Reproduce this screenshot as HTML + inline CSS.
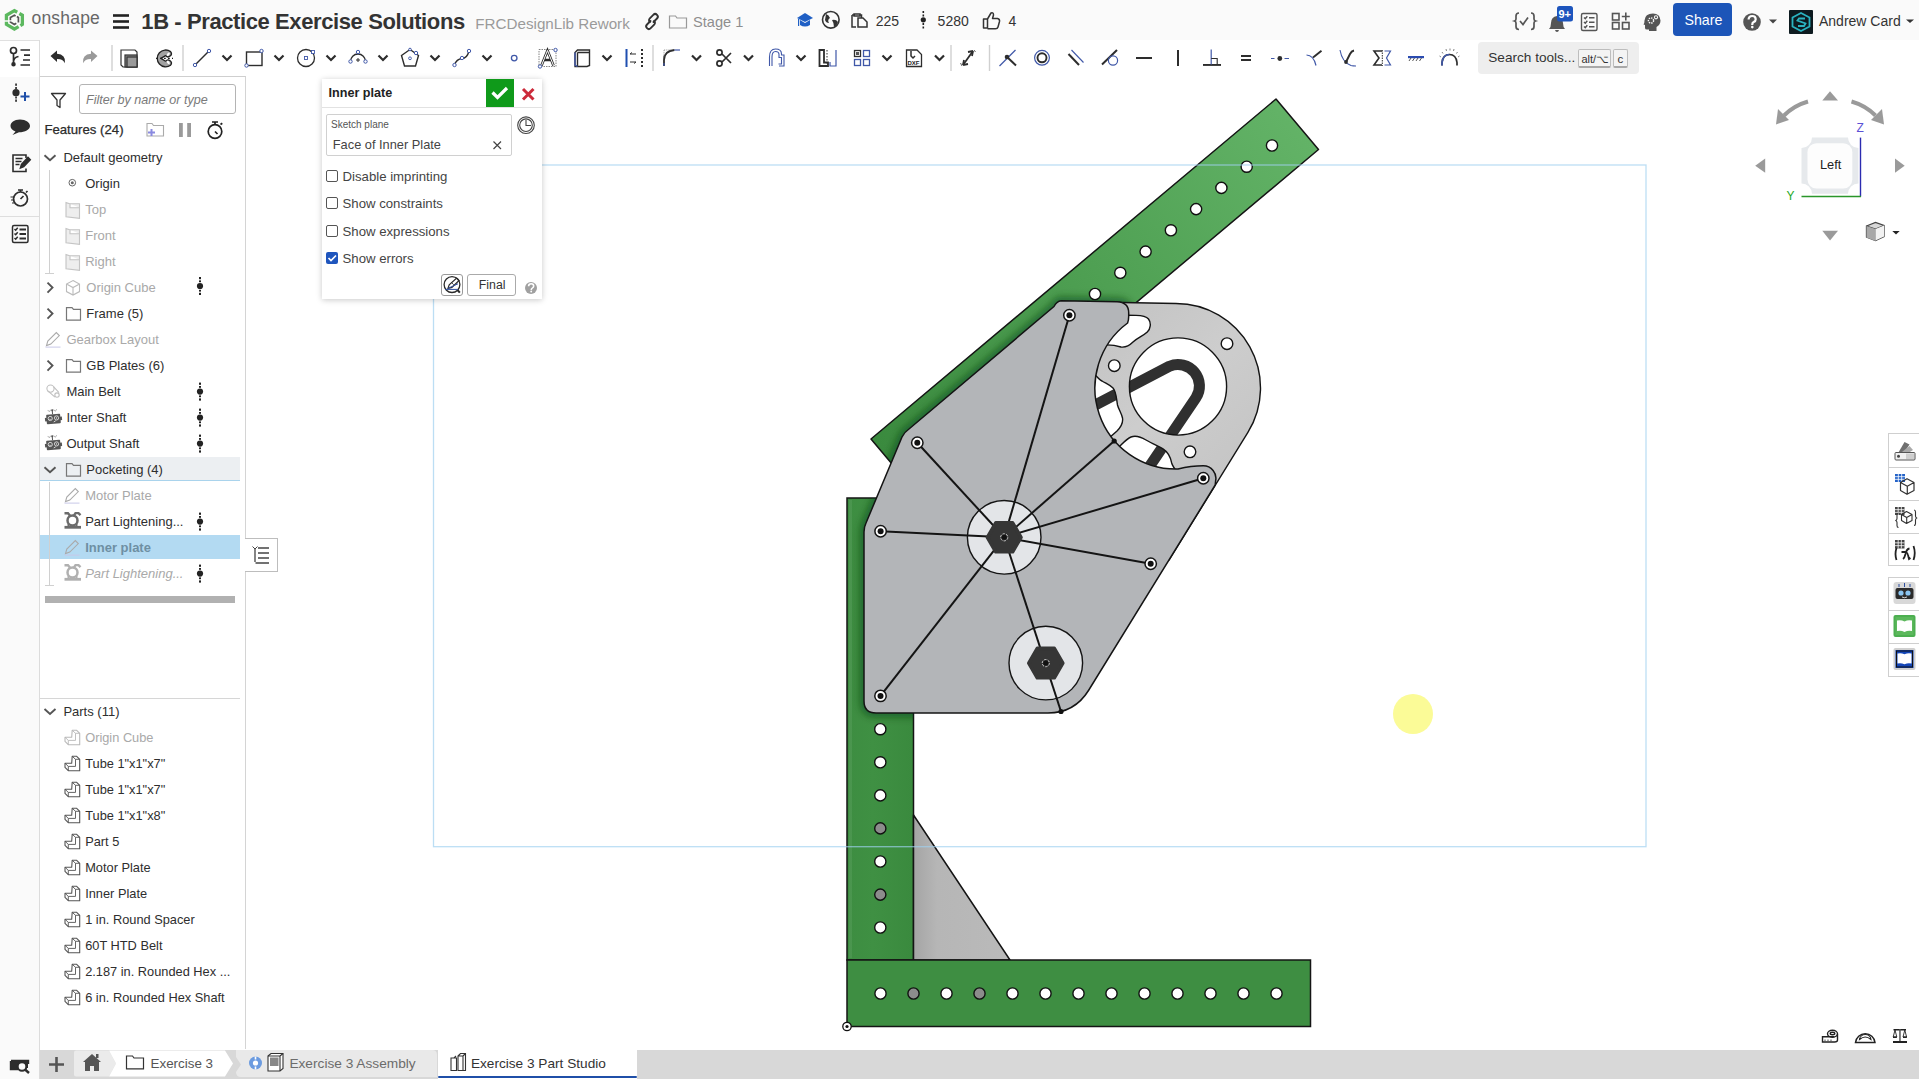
<!DOCTYPE html><html><head><meta charset="utf-8"><style>
html,body{margin:0;padding:0}
body{width:1919px;height:1079px;position:relative;overflow:hidden;background:#fff;font-family:"Liberation Sans", sans-serif}
.t{position:absolute;white-space:nowrap}
</style></head><body>
<div style="position:absolute;left:0px;top:0px;width:1919px;height:40px;background:#fafafa"></div>
<div style="position:absolute;left:0px;top:40px;width:39px;height:1039px;background:#fafafa;border-right:1px solid #dcdcdc"></div>
<div style="position:absolute;left:0px;top:40px;width:39px;height:36px;background:#fff;border-top:1px solid #e0e0e0"></div>
<div style="position:absolute;left:40px;top:40px;width:1879px;height:36px;background:#fff"></div>
<div style="position:absolute;left:40px;top:76px;width:1879px;height:973px;background:#fff"></div>
<div style="position:absolute;left:40px;top:76px;width:206px;height:973px;background:#fff;border-top:1px solid #cfcfcf;border-right:1px solid #d4d4d4;box-sizing:border-box"></div>
<div style="position:absolute;left:0px;top:216px;width:39px;height:1px;background:#dedede"></div>
<div style="position:absolute;left:1673px;top:3px;width:59px;height:32.5px;background:#1c55b8;border-radius:4px"></div>
<div style="position:absolute;left:1478.3px;top:42.2px;width:160.6px;height:31.4px;background:#eeeeee;border-radius:4px"></div>
<div style="position:absolute;left:1578.3px;top:49.3px;width:32.7px;height:18.7px;background:#f4f4f4;border:1px solid #bdbdbd;border-bottom:2px solid #a9a9a9;border-radius:2px;box-sizing:border-box"></div>
<div style="position:absolute;left:1612.8px;top:49.3px;width:15.7px;height:18.7px;background:#f4f4f4;border:1px solid #bdbdbd;border-bottom:2px solid #a9a9a9;border-radius:2px;box-sizing:border-box"></div>
<div style="position:absolute;left:79.4px;top:84.2px;width:157px;height:29.6px;border:1px solid #b4b4b4;border-radius:3px;box-sizing:border-box;background:#fff"></div>
<div style="position:absolute;left:40px;top:457px;width:200px;height:23.5px;background:#eceff2;border-bottom:1.5px solid #a9d3ec;box-sizing:border-box"></div>
<div style="position:absolute;left:40px;top:535px;width:200px;height:24px;background:#b3daf2"></div>
<div style="position:absolute;left:45.2px;top:596.2px;width:190px;height:6.6px;background:#b1b1b1"></div>
<div style="position:absolute;left:40px;top:698px;width:200px;height:1px;background:#d6d6d6"></div>
<svg width="1919" height="1079" style="position:absolute;left:0;top:0">
<defs>
<linearGradient id="gDiag" x1="1300" y1="120" x2="890" y2="460" gradientUnits="userSpaceOnUse">
<stop offset="0" stop-color="#63b367"/><stop offset="0.5" stop-color="#4e9f52"/><stop offset="1" stop-color="#3a8a3e"/></linearGradient>
<linearGradient id="gVert" x1="847" y1="0" x2="913" y2="0" gradientUnits="userSpaceOnUse">
<stop offset="0" stop-color="#3d8d41"/><stop offset="0.4" stop-color="#3f9043"/><stop offset="1" stop-color="#3a8a3e"/></linearGradient>
<linearGradient id="gGus" x1="913" y1="0" x2="1010" y2="0" gradientUnits="userSpaceOnUse">
<stop offset="0" stop-color="#a4a4a4"/><stop offset="0.25" stop-color="#b6b6b6"/><stop offset="1" stop-color="#bababa"/></linearGradient>
<linearGradient id="gMotor" x1="1100" y1="300" x2="1260" y2="470" gradientUnits="userSpaceOnUse">
<stop offset="0" stop-color="#c2c2c2"/><stop offset="0.5" stop-color="#cdcdcd"/><stop offset="1" stop-color="#c4c4c4"/></linearGradient>
</defs>
<polygon points="871,439 1276,99 1318.5,149.5 913.5,489.5" fill="url(#gDiag)" stroke="#141414" stroke-width="1.5" stroke-linejoin="round"/>
<rect x="847" y="498" width="66.5" height="462" fill="url(#gVert)" stroke="#141414" stroke-width="1.5"/>
<defs><clipPath id="barsClip"><polygon points="871,439 1276,99 1318.5,149.5 913.5,489.5"/><rect x="847" y="498" width="66.5" height="462"/></clipPath><filter id="blr" x="-10%" y="-10%" width="120%" height="120%"><feGaussianBlur stdDeviation="3.5"/></filter></defs>
<g clip-path="url(#barsClip)"><path d="M1061,300.8 L1117,301.8 Q1128.7,302.2 1128.7,313 L1128.7,316.3 Q1128.7,320 1127.6,323 A81,81 0 0 0 1178,469 C1186,467 1194,465.7 1203.3,465.7 A12.6,12.6 0 0 1 1215.6,481 L1215.2,485 L1088.5,690.5 Q1074.5,713 1048,713 L876,713 Q864,713 864,701 L864,532 Q864,527 866,523 L902,437 Q904,432.5 909,429 L1054,306.5 Q1057,301 1061,300.8 Z" fill="none" stroke="#0b3d10" stroke-opacity="0.5" stroke-width="9" filter="url(#blr)"/><rect x="849" y="500" width="3" height="458" fill="#fff" fill-opacity="0.07"/></g>
<circle cx="1272" cy="145.5" r="5.6" fill="#fff" stroke="#111" stroke-width="1.4"/>
<circle cx="1246.7" cy="166.7" r="5.6" fill="#fff" stroke="#111" stroke-width="1.4"/>
<circle cx="1221.4" cy="187.9" r="5.6" fill="#fff" stroke="#111" stroke-width="1.4"/>
<circle cx="1196.1" cy="209.1" r="5.6" fill="#fff" stroke="#111" stroke-width="1.4"/>
<circle cx="1170.9" cy="230.3" r="5.6" fill="#fff" stroke="#111" stroke-width="1.4"/>
<circle cx="1145.6" cy="251.6" r="5.6" fill="#fff" stroke="#111" stroke-width="1.4"/>
<circle cx="1120.3" cy="272.8" r="5.6" fill="#fff" stroke="#111" stroke-width="1.4"/>
<circle cx="1095" cy="294" r="5.6" fill="#fff" stroke="#111" stroke-width="1.4"/>
<circle cx="880.3" cy="729.2" r="5.6" fill="#fff" stroke="#111" stroke-width="1.4"/>
<circle cx="880.3" cy="762.3" r="5.6" fill="#fff" stroke="#111" stroke-width="1.4"/>
<circle cx="880.3" cy="795.4" r="5.6" fill="#fff" stroke="#111" stroke-width="1.4"/>
<circle cx="880.3" cy="828.4" r="5.6" fill="#8c8c8c" stroke="#111" stroke-width="1.4"/>
<circle cx="880.3" cy="861.5" r="5.6" fill="#fff" stroke="#111" stroke-width="1.4"/>
<circle cx="880.3" cy="894.6" r="5.6" fill="#8c8c8c" stroke="#111" stroke-width="1.4"/>
<circle cx="880.3" cy="927.5" r="5.6" fill="#fff" stroke="#111" stroke-width="1.4"/>
<polygon points="913.5,815 1010,960 913.5,960" fill="url(#gGus)" stroke="#141414" stroke-width="1.5" stroke-linejoin="round"/>
<rect x="847" y="960" width="463.5" height="66.5" fill="#3e8e42" stroke="#141414" stroke-width="1.5"/>
<circle cx="880.5" cy="993.5" r="5.6" fill="#fff" stroke="#111" stroke-width="1.4"/>
<circle cx="913.5" cy="993.5" r="5.6" fill="#8c8c8c" stroke="#111" stroke-width="1.4"/>
<circle cx="946.5" cy="993.5" r="5.6" fill="#fff" stroke="#111" stroke-width="1.4"/>
<circle cx="979.5" cy="993.5" r="5.6" fill="#8c8c8c" stroke="#111" stroke-width="1.4"/>
<circle cx="1012.5" cy="993.5" r="5.6" fill="#fff" stroke="#111" stroke-width="1.4"/>
<circle cx="1045.5" cy="993.5" r="5.6" fill="#fff" stroke="#111" stroke-width="1.4"/>
<circle cx="1078.5" cy="993.5" r="5.6" fill="#fff" stroke="#111" stroke-width="1.4"/>
<circle cx="1111.5" cy="993.5" r="5.6" fill="#fff" stroke="#111" stroke-width="1.4"/>
<circle cx="1144.5" cy="993.5" r="5.6" fill="#fff" stroke="#111" stroke-width="1.4"/>
<circle cx="1177.5" cy="993.5" r="5.6" fill="#fff" stroke="#111" stroke-width="1.4"/>
<circle cx="1210.5" cy="993.5" r="5.6" fill="#fff" stroke="#111" stroke-width="1.4"/>
<circle cx="1243.5" cy="993.5" r="5.6" fill="#fff" stroke="#111" stroke-width="1.4"/>
<circle cx="1276.5" cy="993.5" r="5.6" fill="#fff" stroke="#111" stroke-width="1.4"/>
<circle cx="847" cy="1026.5" r="4.2" fill="#fff" stroke="#111" stroke-width="1.3"/><circle cx="847" cy="1026.5" r="1.6" fill="#111"/>
<path d="M1086,409.8 L1169.6,366.2 A21.5,21.5 0 0 1 1195.8,398 L1141,479" fill="none" stroke="#303030" stroke-width="11" stroke-linejoin="round"/>
<path d="M1095,302 L1176,303.5 A84.5,84.5 0 0 1 1247.9,432.4 L1169.1,560 L1000,650 Z M1226.6,386.5 A48.6,48.6 0 1 0 1129.4,386.5 A48.6,48.6 0 1 0 1226.6,386.5 Z M1126,315.2 L1136,315.4 C1142,315.5 1146,316 1148.5,319 C1151.5,323 1150.5,329 1147.3,332 C1143,336 1137,338 1133,342 C1129,346 1125,347.5 1121,347 C1116,345.5 1112,344.5 1104,345 L1100,330 Z M1094,373.5 C1097,377 1099,379.5 1102,381 C1106,383.5 1110,385 1113,388 C1116.5,392 1116.5,400 1117.5,405 C1118.5,409 1121.5,413 1122.5,418 C1123.5,424 1120,428 1117,431 L1109,438 L1090,420 Z M1119,447 C1123,443 1127,438.5 1131,437 C1135,435.5 1141,437 1146,440 C1152,443.5 1158,446 1163,448.8 C1168,452 1170.5,457 1171.6,462.7 C1172.5,466 1174,468 1177,472 L1150,478 Z" fill="url(#gMotor)" fill-rule="evenodd" stroke="#141414" stroke-width="1.4"/>
<circle cx="1227" cy="343.7" r="5.8" fill="#fff" stroke="#141414" stroke-width="1.4"/>
<circle cx="1114.3" cy="365.7" r="5.8" fill="#fff" stroke="#141414" stroke-width="1.4"/>
<circle cx="1190" cy="451.8" r="5.8" fill="#fff" stroke="#141414" stroke-width="1.4"/>
<path d="M1061,300.8 L1117,301.8 Q1128.7,302.2 1128.7,313 L1128.7,316.3 Q1128.7,320 1127.6,323 A81,81 0 0 0 1178,469 C1186,467 1194,465.7 1203.3,465.7 A12.6,12.6 0 0 1 1215.6,481 L1215.2,485 L1088.5,690.5 Q1074.5,713 1048,713 L876,713 Q864,713 864,701 L864,532 Q864,527 866,523 L902,437 Q904,432.5 909,429 L1054,306.5 Q1057,301 1061,300.8 Z" fill="#b3b5b8" stroke="#141414" stroke-width="1.5" stroke-linejoin="round"/>
<circle cx="1004.2" cy="537.3" r="36.8" fill="#e3e5e8" stroke="#141414" stroke-width="1.4"/>
<circle cx="1045.8" cy="663.1" r="36.8" fill="#e3e5e8" stroke="#141414" stroke-width="1.4"/>
<line x1="1004.2" y1="537.3" x2="1069.4" y2="315.3" stroke="#141414" stroke-width="2"/>
<line x1="1004.2" y1="537.3" x2="917.3" y2="442.8" stroke="#141414" stroke-width="2"/>
<line x1="1004.2" y1="537.3" x2="880.6" y2="531.2" stroke="#141414" stroke-width="2"/>
<line x1="1004.2" y1="537.3" x2="880.5" y2="695.9" stroke="#141414" stroke-width="2"/>
<line x1="1004.2" y1="537.3" x2="1203.3" y2="478.3" stroke="#141414" stroke-width="2"/>
<line x1="1004.2" y1="537.3" x2="1150.7" y2="563.8" stroke="#141414" stroke-width="2"/>
<line x1="1004.2" y1="537.3" x2="1114.2" y2="441" stroke="#141414" stroke-width="2"/>
<line x1="1004.2" y1="537.3" x2="1061" y2="711.5" stroke="#141414" stroke-width="2"/>
<polygon points="1021,537.3 1012.6,551.8 995.8,551.8 987.4,537.3 995.8,522.8 1012.6,522.8" fill="#363636" stroke="#363636" stroke-width="3.6" stroke-linejoin="round"/>
<circle cx="1004.2" cy="537.3" r="3.6" fill="none" stroke="#c8c8c8" stroke-width="1" stroke-dasharray="2.5 1.2"/><circle cx="1004.2" cy="537.3" r="2.5" fill="#111"/>
<polygon points="1062.8,663.1 1054.3,677.8 1037.3,677.8 1028.8,663.1 1037.3,648.4 1054.3,648.4" fill="#363636" stroke="#363636" stroke-width="3.6" stroke-linejoin="round"/>
<circle cx="1045.8" cy="663.1" r="3.6" fill="none" stroke="#c8c8c8" stroke-width="1" stroke-dasharray="2.5 1.2"/><circle cx="1045.8" cy="663.1" r="2.5" fill="#111"/>
<circle cx="1069.4" cy="315.3" r="5.7" fill="#fff" stroke="#141414" stroke-width="1.5"/><circle cx="1069.4" cy="315.3" r="3.0" fill="#111"/>
<circle cx="917.3" cy="442.8" r="5.7" fill="#fff" stroke="#141414" stroke-width="1.5"/><circle cx="917.3" cy="442.8" r="3.0" fill="#111"/>
<circle cx="880.6" cy="531.2" r="5.7" fill="#fff" stroke="#141414" stroke-width="1.5"/><circle cx="880.6" cy="531.2" r="3.0" fill="#111"/>
<circle cx="880.5" cy="695.9" r="5.7" fill="#fff" stroke="#141414" stroke-width="1.5"/><circle cx="880.5" cy="695.9" r="3.0" fill="#111"/>
<circle cx="1203.3" cy="478.3" r="5.7" fill="#fff" stroke="#141414" stroke-width="1.5"/><circle cx="1203.3" cy="478.3" r="3.0" fill="#111"/>
<circle cx="1150.7" cy="563.8" r="5.7" fill="#fff" stroke="#141414" stroke-width="1.5"/><circle cx="1150.7" cy="563.8" r="3.0" fill="#111"/>
<circle cx="1114.2" cy="441" r="2.6" fill="#111"/>
<circle cx="1061" cy="711.5" r="2.6" fill="#111"/>
<rect x="433.5" y="165" width="1212.5" height="681.7" fill="none" stroke="#9fd0f0" stroke-opacity="0.7" stroke-width="1.3"/>
<circle cx="1413" cy="714" r="20" fill="#fbfb97"/>
</svg>
<div style="position:absolute;left:245.4px;top:538.3px;width:32.3px;height:33.4px;background:#fff;border:1px solid #bdbdbd;border-left:none;box-sizing:border-box"></div>
<div style="position:absolute;left:322px;top:78.7px;width:220.2px;height:220.1px;background:#fff;box-shadow:0 1px 6px rgba(0,0,0,0.22)"></div>
<div style="position:absolute;left:322px;top:106.5px;width:220.2px;height:1px;background:#e2e2e2"></div>
<div style="position:absolute;left:486px;top:79px;width:28px;height:27.8px;background:#0f9a1a"></div>
<div style="position:absolute;left:325.8px;top:113.6px;width:186.6px;height:42.8px;border:1px solid #d0d0d0;box-sizing:border-box;border-radius:2px"></div>
<div style="position:absolute;left:326.1px;top:170.4px;width:12px;height:11.7px;border:1.2px solid #555;border-radius:2px;box-sizing:border-box"></div>
<div style="position:absolute;left:326.1px;top:197.3px;width:12px;height:11.7px;border:1.2px solid #555;border-radius:2px;box-sizing:border-box"></div>
<div style="position:absolute;left:326.1px;top:225px;width:12px;height:11.7px;border:1.2px solid #555;border-radius:2px;box-sizing:border-box"></div>
<div style="position:absolute;left:326.1px;top:252px;width:12px;height:11.7px;background:#1f55bd;border-radius:2px"></div>
<div style="position:absolute;left:441.3px;top:274.3px;width:21.4px;height:21.3px;border:1px solid #9a9a9a;border-radius:3px;box-sizing:border-box"></div>
<div style="position:absolute;left:467.3px;top:274.3px;width:48.3px;height:21.3px;border:1px solid #aaa;border-radius:3px;box-sizing:border-box"></div>
<div style="position:absolute;left:1888px;top:433px;width:31px;height:133px;border:1px solid #cfcfcf;border-right:none;box-sizing:border-box;background:#fff"></div>
<div style="position:absolute;left:1888px;top:576.5px;width:31px;height:100px;border:1px solid #cfcfcf;border-right:none;box-sizing:border-box;background:#fff"></div>
<div style="position:absolute;left:1888px;top:466.8px;width:31px;height:1px;background:#cfcfcf"></div>
<div style="position:absolute;left:1888px;top:499.8px;width:31px;height:1px;background:#cfcfcf"></div>
<div style="position:absolute;left:1888px;top:533px;width:31px;height:1px;background:#cfcfcf"></div>
<div style="position:absolute;left:1888px;top:609.8px;width:31px;height:1px;background:#cfcfcf"></div>
<div style="position:absolute;left:1888px;top:642.8px;width:31px;height:1px;background:#cfcfcf"></div>
<div style="position:absolute;left:40px;top:1049.5px;width:1879px;height:29.5px;background:#d8d8d8"></div>
<div style="position:absolute;left:438.4px;top:1050px;width:199px;height:29px;background:#fff"></div>
<div style="position:absolute;left:438.4px;top:1076px;width:199px;height:2.2px;background:#1f4fa8;border-radius:1px"></div>
<svg width="1919" height="1079" style="position:absolute;left:0;top:0">
<polygon points="14.4,10.6 22.37,15.2 22.37,24.4 14.4,29 6.43,24.4 6.43,15.2" fill="#fbfdfb"/><g fill="none" stroke="#5cb85f" stroke-width="3.3" stroke-linejoin="miter"><path d="M6.43,20.2 V15.2 L14.4,10.6 L17.2,12.2"/><path d="M19.4,13.5 L22.37,15.2 V24.4 L20.4,25.6"/><path d="M18.6,26.6 L14.4,29 L6.43,24.4 V21.8"/></g><g fill="none" stroke="#555" stroke-width="1.7"><path d="M10.4,20.3 V17.5 L14.4,15.2 L15.6,15.9"/><path d="M16.9,16.6 L18.4,17.5 V22.4"/><path d="M10.4,21.4 V22.1 L14.4,24.4 L16.3,23.3"/></g>
<rect x="113" y="14.2" width="16" height="2.6" fill="#222"/>
<rect x="113" y="20.2" width="16" height="2.6" fill="#222"/>
<rect x="113" y="26.2" width="16" height="2.6" fill="#222"/>
<g fill="none" stroke="#333" stroke-width="1.9" stroke-linecap="round"><path d="M650.5,21 l-3.5,3.5 a2.6,2.6 0 0 0 3.7,3.7 l3.5,-3.5 a2.6,2.6 0 0 0 0,-3.7"/><path d="M653.5,22 l3.5,-3.5 a2.6,2.6 0 0 0 -3.7,-3.7 l-3.5,3.5 a2.6,2.6 0 0 0 0,3.7"/></g>
<path d="M669.5,16 h6 l1.5,2 h9.5 v10 h-17 z" fill="none" stroke="#999" stroke-width="1.2"/>
<g fill="#1f5fc4"><polygon points="797,18 805,13 813,18 805,22"/><path d="M800,20 v5 q5,3 10,0 v-5 l-5,3 z"/><rect x="798" y="19" width="1.2" height="7"/></g>
<g><circle cx="830.8" cy="19.8" r="8.3" fill="none" stroke="#333" stroke-width="1.6"/><path d="M826,14 q3,1 4,4 q-3,2 -1,5 q-3,0 -4,-3 z M832,20 q4,-1 6,2 q-1,4 -4,5 q0,-4 -2,-7z" fill="#333"/></g>
<g fill="none" stroke="#333" stroke-width="1.5"><path d="M854,14 h6 v2 h-6z"/><path d="M852,15 h3 M860,15 h1.5 v3 M852,15 v12 h4"/><path d="M858,18 h5 l4,4 v5 h-9 z"/></g>
<g fill="#222"><circle cx="923.3" cy="19.8" r="2.6"/><rect x="922.5" y="11" width="1.6" height="2"/><rect x="922.5" y="14.5" width="1.6" height="2"/><rect x="922.5" y="23" width="1.6" height="2"/><rect x="922.5" y="26.5" width="1.6" height="2"/></g>
<path d="M983.5,19 h4 v9 h-4 z M987.5,19 l3.5,-6 q2.5,-1 2.5,2 l-1,3.5 h5 q2.5,0.5 2,3 l-1.5,5.5 q-0.5,1.8 -2.5,1.8 h-8" fill="none" stroke="#333" stroke-width="1.5" stroke-linejoin="round"/>
<g fill="none" stroke="#555" stroke-width="1.7"><path d="M1519,13 q-3,0 -3,3 v3 q0,1.5 -1.5,2 q1.5,0.5 1.5,2 v3.5 q0,3 3,3"/><path d="M1531,13 q3,0 3,3 v3 q0,1.5 1.5,2 q-1.5,0.5 -1.5,2 v3.5 q0,3 -3,3"/><path d="M1520,21 l3,3.5 l5,-7"/></g>
<path d="M1549,29 q2,-2 2,-6 q0,-6 6,-7 q6,1 6,7 q0,4 2,6 z M1555,30 h4 q-0.5,2 -2,2 q-1.5,0 -2,-2" fill="#555"/>
<rect x="1557" y="6" width="16" height="15.5" rx="2.5" fill="#1d55bd"/>
<g fill="none" stroke="#555" stroke-width="1.4"><rect x="1581.5" y="13.5" width="15.5" height="17" rx="1.5"/><path d="M1584,17.5 l1.3,1.3 l2,-2.5 M1584,22 l1.3,1.3 l2,-2.5 M1584,26.5 l1.3,1.3 l2,-2.5 M1589,17.8 h5.5 M1589,22.3 h5.5 M1589,26.8 h5.5"/></g>
<g fill="none" stroke="#555" stroke-width="1.6"><rect x="1612.5" y="22.5" width="6.5" height="6.5"/><rect x="1622.5" y="22.5" width="6.5" height="6.5"/><rect x="1612.5" y="13.5" width="6.5" height="6.5"/><path d="M1625.8,12.5 v8 M1621.8,16.5 h8"/></g>
<g><path d="M1653,13.5 q-8,0 -8.5,7 q0,3 -1,4 l1.5,0.5 v3 q0,1.5 2,1.5 h2 v1.5 h7.5 v-4 q4,-2.5 4,-6.5 q-0.5,-7 -7.5,-7 z" fill="#555"/><circle cx="1651" cy="20.5" r="2.6" fill="none" stroke="#fafafa" stroke-width="1.4" stroke-dasharray="1.4 1"/><circle cx="1656" cy="17.3" r="1.6" fill="none" stroke="#f6f6f6" stroke-width="1.1"/></g>
<circle cx="1752" cy="22" r="8.8" fill="#555"/><path d="M1748.6,19.6 q0,-3.6 3.6,-3.6 q3.5,0 3.5,3.2 q0,1.9 -2,2.9 q-1.4,0.7 -1.4,2.2 v0.6" fill="none" stroke="#fff" stroke-width="2.2"/><circle cx="1752.3" cy="27.1" r="1.3" fill="#fff"/>
<polygon points="1769,19.5 1777,19.5 1773,23.5" fill="#444"/>
<rect x="1789" y="10" width="24" height="24" rx="1" fill="#0d1a1f"/><g fill="none" stroke="#2ab3c0" stroke-width="1.8"><polygon points="1801,13 1809.5,17.5 1809.5,26.5 1801,31 1792.5,26.5 1792.5,17.5"/><path d="M1805,18.5 h-6 l-1.5,2 l8,3 l-1.5,2.5 h-6"/></g>
<polygon points="1906,19.5 1914,19.5 1910,23" fill="#333"/>
<g fill="none" stroke="#2d2d2d" stroke-width="1.7"><circle cx="13.5" cy="50.5" r="3"/><path d="M13.5,53.5 v10.5 M13.5,62 q0,-4.5 5,-5.5"/><circle cx="13.5" cy="64.3" r="1.4" fill="#2d2d2d"/><path d="M20.5,50 h9.5 M24,55.2 h6 M23,60 h7 M20.5,65 h9.5"/></g>
<path d="M50.5,56 l6.5,-5.5 v3.2 q9,0.5 8,9.5 q-2,-4.5 -8,-4.3 v3.2 z" fill="#2d2d2d"/>
<path d="M97.5,56 l-6.5,-5.5 v3.2 q-9,0.5 -8,9.5 q2,-4.5 8,-4.3 v3.2 z" fill="#9a9a9a"/>
<rect x="111.3" y="45" width="1.4" height="26" fill="#d0d0d0"/>
<rect x="182.3" y="45" width="1.4" height="26" fill="#d0d0d0"/>
<rect x="652.3" y="45" width="1.4" height="26" fill="#d0d0d0"/>
<rect x="950.3" y="45" width="1.4" height="26" fill="#d0d0d0"/>
<rect x="988.8" y="45" width="1.4" height="26" fill="#d0d0d0"/>
<g stroke="#333" stroke-width="1.2"><path d="M121,50 h14 l2,2 v15 h-14 l-2,-2 z" fill="#fff"/><rect x="125" y="55" width="12" height="12" fill="#8b8b8b"/><rect x="127" y="57" width="10" height="10" fill="#9a9a9a"/></g>
<g><path d="M160.9,58.4 L165.6,55.6 A3.1,3.1 0 0 0 170.6,51.6 A8.4,8.4 0 1 0 170.6,65.2 A3.1,3.1 0 0 0 165.6,61.2 Z" fill="#a2a2a2" stroke="#222" stroke-width="1.3" stroke-linejoin="round"/><ellipse cx="168.3" cy="54.3" rx="1.9" ry="1.1" fill="#fff" transform="rotate(-50 168.3 54.3)"/><ellipse cx="168.3" cy="62.5" rx="1.9" ry="1.1" fill="#fff" transform="rotate(50 168.3 62.5)"/><path d="M156,58.4 h17" stroke="#222" stroke-width="1.1" stroke-dasharray="1.8 2.2"/></g>
<path d="M195,65 L209,51" stroke="#2d2d2d" stroke-width="1.4"/><circle cx="195" cy="65" r="1.7" fill="#fff" stroke="#4058a8" stroke-width="1"/><circle cx="209" cy="51" r="1.7" fill="#fff" stroke="#4058a8" stroke-width="1"/>
<path d="M222.5,55.5 l4.5,4.5 l4.5,-4.5" fill="none" stroke="#2d2d2d" stroke-width="2.2"/>
<rect x="246.5" y="52" width="15.5" height="13.5" fill="none" stroke="#2d2d2d" stroke-width="1.4"/><circle cx="246.5" cy="65.5" r="1.7" fill="#fff" stroke="#4058a8" stroke-width="1"/><circle cx="261.5" cy="51" r="1.7" fill="#fff" stroke="#4058a8" stroke-width="1"/>
<path d="M274.5,55.5 l4.5,4.5 l4.5,-4.5" fill="none" stroke="#2d2d2d" stroke-width="2.2"/>
<circle cx="306" cy="58" r="8.5" fill="none" stroke="#2d2d2d" stroke-width="1.3"/><rect x="304.5" y="56.5" width="3" height="3" fill="none" stroke="#4058a8" stroke-width="0.9"/><rect x="311.5" y="50.5" width="3" height="3" fill="#fff" stroke="#4058a8" stroke-width="0.9"/>
<path d="M326.5,55.5 l4.5,4.5 l4.5,-4.5" fill="none" stroke="#2d2d2d" stroke-width="2.2"/>
<path d="M350.5,61.5 a7.5,7.5 0 0 1 15,0" fill="none" stroke="#2d2d2d" stroke-width="1.3"/><path d="M356,60 h4 M358,58 v4" stroke="#2d2d2d" stroke-width="1"/><circle cx="350.5" cy="61.5" r="1.7" fill="#fff" stroke="#4058a8" stroke-width="1"/><circle cx="365.5" cy="61.5" r="1.7" fill="#fff" stroke="#4058a8" stroke-width="1"/><circle cx="358" cy="52" r="1.7" fill="#fff" stroke="#4058a8" stroke-width="1"/>
<path d="M378.5,55.5 l4.5,4.5 l4.5,-4.5" fill="none" stroke="#2d2d2d" stroke-width="2.2"/>
<polygon points="410,49.5 418.5,55.5 415.5,66 404.5,66 401.5,55.5" fill="none" stroke="#2d2d2d" stroke-width="1.4"/><circle cx="410" cy="58.3" r="1.4" fill="none" stroke="#4058a8" stroke-width="0.9"/><circle cx="416" cy="53" r="1.7" fill="#fff" stroke="#4058a8" stroke-width="1"/><circle cx="410" cy="49.5" r="1.3" fill="#fff" stroke="#4058a8" stroke-width="1"/>
<path d="M430.5,55.5 l4.5,4.5 l4.5,-4.5" fill="none" stroke="#2d2d2d" stroke-width="2.2"/>
<path d="M454.5,65 q2,-6 7.5,-6.5 q5,0 7,-7.5" fill="none" stroke="#2d2d2d" stroke-width="1.4"/><circle cx="454.5" cy="65" r="1.7" fill="#fff" stroke="#4058a8" stroke-width="1"/><circle cx="462" cy="58" r="1.7" fill="#fff" stroke="#4058a8" stroke-width="1"/><circle cx="469" cy="51" r="1.7" fill="#fff" stroke="#4058a8" stroke-width="1"/>
<path d="M482.5,55.5 l4.5,4.5 l4.5,-4.5" fill="none" stroke="#2d2d2d" stroke-width="2.2"/>
<circle cx="514.2" cy="58.1" r="2.8" fill="none" stroke="#4058a8" stroke-width="1.3"/>
<rect x="539" y="49.5" width="17" height="17" fill="none" stroke="#666" stroke-width="0.8" stroke-dasharray="1.5 1"/><path d="M541.5,65.5 l6,-15 l6,15 M544,60 h7" fill="none" stroke="#2d2d2d" stroke-width="2.6"/><path d="M541.5,65.5 l6,-15 l6,15" fill="none" stroke="#fff" stroke-width="1"/><circle cx="555.5" cy="50" r="1.7" fill="#fff" stroke="#4058a8" stroke-width="1"/><circle cx="540" cy="66.5" r="1.7" fill="#fff" stroke="#4058a8" stroke-width="1"/>
<g fill="none" stroke-width="1.4"><path d="M575,52.5 l2.5,-2.5 h12 v15.5 l-2.5,1 h-12 z" stroke="#2d2d2d" fill="#fff"/><path d="M577.5,52.5 h12 M577.5,52.5 v14" stroke="#2d2d2d"/><path d="M575,52.5 v12.5 l2.5,1.5" stroke="#4058a8"/></g>
<path d="M602.5,55.5 l4.5,4.5 l4.5,-4.5" fill="none" stroke="#2d2d2d" stroke-width="2.2"/>
<rect x="625.5" y="49" width="2" height="18" fill="#1f4fb0"/><path d="M630,54 h6 M630,62 h6" stroke="#2d2d2d" stroke-width="1"/><path d="M630,54 l2,-1.5 M636,62 l-2,1.5" stroke="#2d2d2d" stroke-width="1"/><path d="M642,49 v18" stroke="#2d2d2d" stroke-width="2" stroke-dasharray="2 2"/>
<path d="M664,66 v-6 q0,-9 10.5,-10" fill="none" stroke="#2d2d2d" stroke-width="1.8"/><path d="M674.5,50 h5.5" stroke="#4058a8" stroke-width="1.2"/><path d="M664,66 v-3" stroke="#4058a8" stroke-width="1.2"/><path d="M664,50 h7 M664,50 v7" stroke="#888" stroke-width="0.8" stroke-dasharray="1.2 1"/>
<path d="M692,55.5 l4.5,4.5 l4.5,-4.5" fill="none" stroke="#2d2d2d" stroke-width="2.2"/>
<g fill="none" stroke="#2d2d2d" stroke-width="1.7"><circle cx="719.5" cy="52.5" r="2.6"/><circle cx="719.5" cy="63.5" r="2.6"/><path d="M722,54 l9,9 M722,62 l9,-9"/></g>
<path d="M744,55.5 l4.5,4.5 l4.5,-4.5" fill="none" stroke="#2d2d2d" stroke-width="2.2"/>
<g fill="none" stroke="#4058a8" stroke-width="1.1"><path d="M769.5,66 v-9 q0,-8 6,-8 q6,0 6,5 v1 h2.5 v11 h-5"/><path d="M772,66 v-9 q0,-5.5 3.5,-5.5 q3.5,0 3.5,3 v3 h2.5 v6.5 h-3"/></g>
<path d="M796.5,55.5 l4.5,4.5 l4.5,-4.5" fill="none" stroke="#2d2d2d" stroke-width="2.2"/>
<path d="M819.5,50 h4.5 v12.5 h4 v3.5 h-8.5 z" fill="#fff" stroke="#2d2d2d" stroke-width="1.8"/><path d="M827,50 v14" stroke="#2d2d2d" stroke-width="1" stroke-dasharray="1.5 1.5"/><path d="M836,50 v16 h-6 v-4" fill="none" stroke="#4058a8" stroke-width="1.2"/>
<g fill="none" stroke-width="1.3"><rect x="854.5" y="50.5" width="6" height="6" stroke="#2d2d2d"/><rect x="856" y="52" width="3" height="3" fill="#555" stroke="none"/><rect x="863.5" y="50.5" width="6" height="6" stroke="#4058a8"/><rect x="854.5" y="59.5" width="6" height="6" stroke="#4058a8"/><rect x="863.5" y="59.5" width="6" height="6" stroke="#4058a8"/></g>
<path d="M882.5,55.5 l4.5,4.5 l4.5,-4.5" fill="none" stroke="#2d2d2d" stroke-width="2.2"/>
<path d="M906.5,50 h10.5 l4.5,4.5 v12 h-15 z" fill="#fff" stroke="#2d2d2d" stroke-width="1.3"/><path d="M911,51 v5 l2,2 l2,-2" fill="none" stroke="#2d2d2d" stroke-width="1.5"/>
<path d="M935,55.5 l4.5,4.5 l4.5,-4.5" fill="none" stroke="#2d2d2d" stroke-width="2.2"/>
<path d="M963,65 L973,51" stroke="#2d2d2d" stroke-width="1.8"/><path d="M963,65 l1,-5 M963,65 l5,-1 M973,51 l-5,1 M973,51 l-1,5" stroke="#2d2d2d" stroke-width="1.8"/><path d="M962,66 l-1.5,-3 M974,50 l1.5,2" stroke="#555" stroke-width="0.9"/>
<path d="M999.5,66 L1015.5,50" stroke="#4058a8" stroke-width="1.2"/><path d="M1006.8,56.8 L1016,65.5" stroke="#2d2d2d" stroke-width="2"/><circle cx="1007" cy="57" r="2.3" fill="#2d2d2d"/>
<circle cx="1042" cy="57.8" r="7.4" fill="none" stroke="#4058a8" stroke-width="1.2"/><circle cx="1042" cy="57.8" r="4.5" fill="none" stroke="#2d2d2d" stroke-width="1.9"/>
<path d="M1068.5,54 L1079,65" stroke="#2d2d2d" stroke-width="2"/><path d="M1071.5,50 L1083.5,62.5" stroke="#4058a8" stroke-width="1.1"/>
<path d="M1102,64.5 L1117,50" stroke="#2d2d2d" stroke-width="2"/><circle cx="1113" cy="60.5" r="4.6" fill="none" stroke="#4058a8" stroke-width="1.2"/>
<rect x="1136" y="57" width="16" height="2" fill="#2d2d2d"/>
<rect x="1177" y="50" width="2" height="16" fill="#2d2d2d"/>
<rect x="1203" y="64" width="18" height="1.9" fill="#2d2d2d"/><path d="M1211.2,49.5 v15" stroke="#4058a8" stroke-width="1.2"/><path d="M1211.2,58.5 h6 v6" fill="none" stroke="#2d2d2d" stroke-width="1.1"/>
<rect x="1241" y="55" width="10" height="2" fill="#2d2d2d"/><rect x="1241" y="59" width="10" height="2" fill="#2d2d2d"/>
<path d="M1271,58.5 h3.5 M1284.5,58.5 h4.5" stroke="#4058a8" stroke-width="1.2"/><circle cx="1279.8" cy="58.5" r="2.4" fill="#2d2d2d"/>
<path d="M1306.5,55 q7,0 9.5,10.5" fill="none" stroke="#4058a8" stroke-width="1.2"/><path d="M1313,57.5 L1321.5,50.8" stroke="#2d2d2d" stroke-width="1.9"/>
<path d="M1340,50 q2,12 11,15.5 q2,0.5 5,0.5" fill="none" stroke="#4058a8" stroke-width="1.1"/><path d="M1346,62 l4,-8 q1.5,-3 4,-3.5" fill="none" stroke="#2d2d2d" stroke-width="1.9"/><circle cx="1346" cy="62" r="1.9" fill="#2d2d2d"/>
<path d="M1382,51 h-8 l5,7 l-5,7 h8" fill="none" stroke="#2d2d2d" stroke-width="1.6"/><path d="M1382.3,50 v16" stroke="#2d2d2d" stroke-width="1" stroke-dasharray="1.5 1"/><path d="M1384.5,51 h6 l-4,7 l4,7 h-6" fill="none" stroke="#4058a8" stroke-width="1.2"/>
<rect x="1408" y="56" width="16" height="2.2" fill="#2a4bb0"/><path d="M1409,61 l2,-3 M1412.5,61 l2,-3 M1416,61 l2,-3 M1419.5,61 l2,-3" stroke="#444" stroke-width="0.9"/>
<path d="M1442,65.5 v-3 q1,-8 7.5,-8 q6.5,0 7.5,8 v3" fill="none" stroke="#2d2d2d" stroke-width="1.7"/><path d="M1442,65.5 v-3 q1,-8 7.5,-8" fill="none" stroke="#4058a8" stroke-width="1.7"/><path d="M1441,57 l-1.5,-1 M1443,53.5 l-1,-1.5 M1446.5,51 l-0.5,-2 M1450,50.5 v-2 M1453.5,51 l0.5,-2 M1456.5,53.5 l1,-1.5 M1458,57 l1.5,-1" stroke="#777" stroke-width="0.9"/>
<g fill="#2d2d2d"><circle cx="16" cy="92.7" r="3.6"/><rect x="15.2" y="83.5" width="1.7" height="2.3"/><rect x="15.2" y="87" width="1.7" height="2"/><rect x="15.2" y="96.5" width="1.7" height="2"/><rect x="15.2" y="99.5" width="1.7" height="2.3"/></g><path d="M25,92 v9 M20.5,96.5 h9" stroke="#1f4fa8" stroke-width="2"/>
<path d="M20,119.5 c-6,0 -9.5,3 -9.5,6.5 c0,2.5 2,4.5 5,5.5 l-3,3.5 l6.5,-2.8 c6,0 11,-3 11,-6.3 c0,-3.5 -4,-6.5 -10,-6.5 z" fill="#2d2d2d"/>
<g fill="none" stroke="#2d2d2d" stroke-width="1.6"><path d="M26,158 v-3 h-13 v16.5 h13 v-3"/><path d="M15.5,158.5 h7 M15.5,161.5 h6 M15.5,164.5 h4"/><path d="M20.5,168 l1,-3.5 l6.5,-7 l2.2,2.2 l-6.5,7 z" fill="#2d2d2d"/></g>
<g fill="none" stroke="#2d2d2d" stroke-width="1.7"><circle cx="20.5" cy="199" r="7"/><path d="M18,190 h5 M20.5,190 v2 M26,192.5 l1.5,-1.5 M20.5,199 l3,-3"/><path d="M10.5,197 h4 M11,200 h3.5 M12,203 h2.5" stroke-width="1.2"/></g>
<g fill="none" stroke="#2d2d2d" stroke-width="1.5"><rect x="12.5" y="225.5" width="15.5" height="17" rx="1.5"/><path d="M14.5,229 l1.2,1.2 l2,-2.5 M14.5,233.5 l1.2,1.2 l2,-2.5 M14.5,238 l1.2,1.2 l2,-2.5"/></g><g fill="#2d2d2d"><rect x="19.5" y="228.5" width="6.5" height="2"/><rect x="19.5" y="233" width="6.5" height="2"/><rect x="19.5" y="237.5" width="6.5" height="2"/></g>
<path d="M11,1061 h17 v3 M11,1061 v8 h7" fill="none" stroke="#2d2d2d" stroke-width="2.4"/><rect x="11" y="1061" width="17" height="7" fill="#2d2d2d"/><circle cx="22" cy="1066.5" r="4.3" fill="#fafafa" stroke="#2d2d2d" stroke-width="2"/><path d="M25,1069.5 l4,3.5" stroke="#2d2d2d" stroke-width="2.4"/>
<path d="M51.5,93.5 h14 l-5.5,6.5 v7.5 l-3,-2 v-5.5 z" fill="none" stroke="#333" stroke-width="1.3" stroke-linejoin="round"/>
<path d="M147,126 v-2.5 h5 l1.5,2 h10 v10.5 h-16.5 z" fill="none" stroke="#aaa" stroke-width="1.1"/><path d="M148,132.5 h7 M151.5,129 v7" stroke="#8a8ae0" stroke-width="2"/>
<rect x="179" y="123" width="3.8" height="14" fill="#9a9a9a"/><rect x="187.2" y="123" width="3.8" height="14" fill="#9a9a9a"/>
<g fill="none" stroke="#222" stroke-width="1.7"><circle cx="215" cy="131.5" r="6.8"/><path d="M212,122 h6 M215,122 v2.7 M220.5,124.5 l1.8,-1.3 M215,131.5 l2.5,2.5"/></g>
<path d="M44.5,155.2 l5.5,5 l5.5,-5" fill="none" stroke="#555" stroke-width="1.9"/>
<circle cx="72.3" cy="182.7" r="3.3" fill="none" stroke="#666" stroke-width="1"/><circle cx="72.3" cy="182.7" r="1.5" fill="#666"/>
<path d="M66,202.6 l4,1.2 v4 h9.5 v10.5 l-13.5,-1.5 z M70,203.79999999999998 h9.5 v4" fill="#eee" stroke="#c4c4c4" stroke-width="1.1"/>
<path d="M66,228.6 l4,1.2 v4 h9.5 v10.5 l-13.5,-1.5 z M70,229.79999999999998 h9.5 v4" fill="#eee" stroke="#c4c4c4" stroke-width="1.1"/>
<path d="M66,254.59999999999997 l4,1.2 v4 h9.5 v10.5 l-13.5,-1.5 z M70,255.79999999999995 h9.5 v4" fill="#eee" stroke="#c4c4c4" stroke-width="1.1"/>
<path d="M49.5,170 v103.5 M45,273.5 h9" stroke="#d0d0d0" stroke-width="1"/>
<path d="M47.5,282.59999999999997 l5,5 l-5,5" fill="none" stroke="#555" stroke-width="1.9"/>
<g fill="none" stroke="#bbb" stroke-width="1.1"><path d="M73,280.59999999999997 l6.5,3.5 v7.5 l-6.5,3.5 l-6.5,-3.5 v-7.5 z M66.5,284.09999999999997 l6.5,3.5 l6.5,-3.5 M73,287.59999999999997 v7.5"/></g>
<g fill="#222"><circle cx="200" cy="286" r="3.1"/><rect x="199" y="277" width="2" height="2.2"/><rect x="199" y="280.4" width="2" height="1.8"/><rect x="199" y="289.8" width="2" height="1.8"/><rect x="199" y="292.8" width="2" height="2.2"/></g>
<path d="M47.5,308.59999999999997 l5,5 l-5,5" fill="none" stroke="#555" stroke-width="1.9"/>
<path d="M66.5,307.59999999999997 h5.5 l1.5,1.8 h7 v10.7 h-14 z" fill="none" stroke="#777" stroke-width="1.2"/>
<path d="M46.5,345.59999999999997 l1.3,-4.5 l8.5,-8.5 l3,3 l-8.5,8.5 z" fill="none" stroke="#aaa" stroke-width="1.1"/><path d="M45.5,347.09999999999997 h15" stroke="#c8c8e8" stroke-width="1"/>
<path d="M47.5,360.59999999999997 l5,5 l-5,5" fill="none" stroke="#555" stroke-width="1.9"/>
<path d="M66.5,359.59999999999997 h5.5 l1.5,1.8 h7 v10.7 h-14 z" fill="none" stroke="#777" stroke-width="1.2"/>
<g fill="none" stroke="#c0c0c0" stroke-width="1.1"><circle cx="50.5" cy="388.59999999999997" r="3.6"/><circle cx="57" cy="395.09999999999997" r="2.2"/><path d="M47.5,390.59999999999997 l7.5,6.5 M53.5,386.59999999999997 l5.5,6"/></g>
<g fill="#222"><circle cx="200" cy="391.59999999999997" r="3.1"/><rect x="199" y="382.59999999999997" width="2" height="2.2"/><rect x="199" y="385.99999999999994" width="2" height="1.8"/><rect x="199" y="395.4" width="2" height="1.8"/><rect x="199" y="398.4" width="2" height="2.2"/></g>
<g transform="rotate(-5 53.5 418.99999999999994)"><rect x="46.5" y="414.19999999999993" width="14" height="9.6" rx="0.8" fill="#555"/><rect x="45" y="417.19999999999993" width="2" height="3.6" fill="#555"/><rect x="60" y="417.19999999999993" width="2" height="3.6" fill="#555"/><circle cx="50.3" cy="418.19999999999993" r="2.1" fill="none" stroke="#ddd" stroke-width="0.9"/><circle cx="56.6" cy="418.19999999999993" r="2.1" fill="none" stroke="#ddd" stroke-width="0.9"/><circle cx="56.6" cy="418.19999999999993" r="0.7" fill="#ddd"/><path d="M49.3,418.79999999999995 q1,0.8 2,0" stroke="#ddd" stroke-width="0.8" fill="none"/><path d="M53.5,421.99999999999994 l2,-1" stroke="#ddd" stroke-width="0.9"/><path d="M53,414.19999999999993 v-3.5" stroke="#555" stroke-width="1"/><circle cx="53" cy="410.19999999999993" r="1.1" fill="#555"/><path d="M48.5,409.49999999999994 l1.5,2 l1.5,-2 M54.5,409.49999999999994 l1.5,2 l1.5,-2" stroke="#aaa" stroke-width="0.9" fill="none"/></g>
<g fill="#222"><circle cx="200" cy="417.59999999999997" r="3.1"/><rect x="199" y="408.59999999999997" width="2" height="2.2"/><rect x="199" y="411.99999999999994" width="2" height="1.8"/><rect x="199" y="421.4" width="2" height="1.8"/><rect x="199" y="424.4" width="2" height="2.2"/></g>
<g transform="rotate(-5 53.5 444.99999999999994)"><rect x="46.5" y="440.19999999999993" width="14" height="9.6" rx="0.8" fill="#555"/><rect x="45" y="443.19999999999993" width="2" height="3.6" fill="#555"/><rect x="60" y="443.19999999999993" width="2" height="3.6" fill="#555"/><circle cx="50.3" cy="444.19999999999993" r="2.1" fill="none" stroke="#ddd" stroke-width="0.9"/><circle cx="56.6" cy="444.19999999999993" r="2.1" fill="none" stroke="#ddd" stroke-width="0.9"/><circle cx="56.6" cy="444.19999999999993" r="0.7" fill="#ddd"/><path d="M49.3,444.79999999999995 q1,0.8 2,0" stroke="#ddd" stroke-width="0.8" fill="none"/><path d="M53.5,447.99999999999994 l2,-1" stroke="#ddd" stroke-width="0.9"/><path d="M53,440.19999999999993 v-3.5" stroke="#555" stroke-width="1"/><circle cx="53" cy="436.19999999999993" r="1.1" fill="#555"/><path d="M48.5,435.49999999999994 l1.5,2 l1.5,-2 M54.5,435.49999999999994 l1.5,2 l1.5,-2" stroke="#aaa" stroke-width="0.9" fill="none"/></g>
<g fill="#222"><circle cx="200" cy="443.59999999999997" r="3.1"/><rect x="199" y="434.59999999999997" width="2" height="2.2"/><rect x="199" y="437.99999999999994" width="2" height="1.8"/><rect x="199" y="447.4" width="2" height="1.8"/><rect x="199" y="450.4" width="2" height="2.2"/></g>
<path d="M44.5,467.2 l5.5,5 l5.5,-5" fill="none" stroke="#555" stroke-width="1.9"/>
<path d="M66.5,463.59999999999997 h5.5 l1.5,1.8 h7 v10.7 h-14 z" fill="none" stroke="#777" stroke-width="1.2"/>
<path d="M65.5,501.59999999999997 l1.3,-4.5 l8.5,-8.5 l3,3 l-8.5,8.5 z" fill="none" stroke="#aaa" stroke-width="1.1"/><path d="M64.5,503.09999999999997 h15" stroke="#c8c8e8" stroke-width="1"/>
<g><rect x="64.5" y="525.9" width="16.5" height="2.8" fill="#6b6b6b"/><path d="M68.5,526.1 v-2 M76.5,526.1 v-2" stroke="#6b6b6b" stroke-width="2"/><circle cx="72.5" cy="520.4" r="5" fill="none" stroke="#6b6b6b" stroke-width="2.5"/><path d="M64.5,513.3000000000001 h3.5 l2.5,3 M80.5,515.1 l-2,-2 h-3 l-2,3" stroke="#6b6b6b" stroke-width="2.4" fill="none"/></g>
<g fill="#222"><circle cx="200" cy="521.6" r="3.1"/><rect x="199" y="512.6" width="2" height="2.2"/><rect x="199" y="516.0" width="2" height="1.8"/><rect x="199" y="525.4" width="2" height="1.8"/><rect x="199" y="528.4" width="2" height="2.2"/></g>
<path d="M65.5,553.6 l1.3,-4.5 l8.5,-8.5 l3,3 l-8.5,8.5 z" fill="none" stroke="#aaa" stroke-width="1.1"/><path d="M64.5,555.1 h15" stroke="#c8c8e8" stroke-width="1"/>
<g><rect x="64.5" y="577.9" width="16.5" height="2.8" fill="#b0b0b0"/><path d="M68.5,578.1 v-2 M76.5,578.1 v-2" stroke="#b0b0b0" stroke-width="2"/><circle cx="72.5" cy="572.4" r="5" fill="none" stroke="#b0b0b0" stroke-width="2.5"/><path d="M64.5,565.3000000000001 h3.5 l2.5,3 M80.5,567.1 l-2,-2 h-3 l-2,3" stroke="#b0b0b0" stroke-width="2.4" fill="none"/></g>
<g fill="#222"><circle cx="200" cy="573.6" r="3.1"/><rect x="199" y="564.6" width="2" height="2.2"/><rect x="199" y="568.0" width="2" height="1.8"/><rect x="199" y="577.4" width="2" height="1.8"/><rect x="199" y="580.4" width="2" height="2.2"/></g>
<path d="M49.5,482 v103.5 M45,585.5 h9" stroke="#d0d0d0" stroke-width="1"/>
<path d="M44.5,709 l5.5,5 l5.5,-5" fill="none" stroke="#555" stroke-width="1.9"/>
<g fill="none" stroke="#b9b9b9" stroke-width="1.1" stroke-linejoin="round"><path d="M72.2,730.3 h4.5 l3,3 v11.4 h-11.4 l-3.3,-3.3 v-4.2 h6.7 z"/><path d="M72.2,730.3 l3.3,3 h4.2 M75.5,733.3 v7.1 h-7.2 l-3.3,-3.2 M68.3,740.4 v4.3" stroke-width="0.9"/></g>
<g fill="none" stroke="#555" stroke-width="1.1" stroke-linejoin="round"><path d="M72.2,756.3 h4.5 l3,3 v11.4 h-11.4 l-3.3,-3.3 v-4.2 h6.7 z"/><path d="M72.2,756.3 l3.3,3 h4.2 M75.5,759.3 v7.1 h-7.2 l-3.3,-3.2 M68.3,766.4 v4.3" stroke-width="0.9"/></g>
<g fill="none" stroke="#555" stroke-width="1.1" stroke-linejoin="round"><path d="M72.2,782.3 h4.5 l3,3 v11.4 h-11.4 l-3.3,-3.3 v-4.2 h6.7 z"/><path d="M72.2,782.3 l3.3,3 h4.2 M75.5,785.3 v7.1 h-7.2 l-3.3,-3.2 M68.3,792.4 v4.3" stroke-width="0.9"/></g>
<g fill="none" stroke="#555" stroke-width="1.1" stroke-linejoin="round"><path d="M72.2,808.3 h4.5 l3,3 v11.4 h-11.4 l-3.3,-3.3 v-4.2 h6.7 z"/><path d="M72.2,808.3 l3.3,3 h4.2 M75.5,811.3 v7.1 h-7.2 l-3.3,-3.2 M68.3,818.4 v4.3" stroke-width="0.9"/></g>
<g fill="none" stroke="#555" stroke-width="1.1" stroke-linejoin="round"><path d="M72.2,834.3 h4.5 l3,3 v11.4 h-11.4 l-3.3,-3.3 v-4.2 h6.7 z"/><path d="M72.2,834.3 l3.3,3 h4.2 M75.5,837.3 v7.1 h-7.2 l-3.3,-3.2 M68.3,844.4 v4.3" stroke-width="0.9"/></g>
<g fill="none" stroke="#555" stroke-width="1.1" stroke-linejoin="round"><path d="M72.2,860.3 h4.5 l3,3 v11.4 h-11.4 l-3.3,-3.3 v-4.2 h6.7 z"/><path d="M72.2,860.3 l3.3,3 h4.2 M75.5,863.3 v7.1 h-7.2 l-3.3,-3.2 M68.3,870.4 v4.3" stroke-width="0.9"/></g>
<g fill="none" stroke="#555" stroke-width="1.1" stroke-linejoin="round"><path d="M72.2,886.3 h4.5 l3,3 v11.4 h-11.4 l-3.3,-3.3 v-4.2 h6.7 z"/><path d="M72.2,886.3 l3.3,3 h4.2 M75.5,889.3 v7.1 h-7.2 l-3.3,-3.2 M68.3,896.4 v4.3" stroke-width="0.9"/></g>
<g fill="none" stroke="#555" stroke-width="1.1" stroke-linejoin="round"><path d="M72.2,912.3 h4.5 l3,3 v11.4 h-11.4 l-3.3,-3.3 v-4.2 h6.7 z"/><path d="M72.2,912.3 l3.3,3 h4.2 M75.5,915.3 v7.1 h-7.2 l-3.3,-3.2 M68.3,922.4 v4.3" stroke-width="0.9"/></g>
<g fill="none" stroke="#555" stroke-width="1.1" stroke-linejoin="round"><path d="M72.2,938.3 h4.5 l3,3 v11.4 h-11.4 l-3.3,-3.3 v-4.2 h6.7 z"/><path d="M72.2,938.3 l3.3,3 h4.2 M75.5,941.3 v7.1 h-7.2 l-3.3,-3.2 M68.3,948.4 v4.3" stroke-width="0.9"/></g>
<g fill="none" stroke="#555" stroke-width="1.1" stroke-linejoin="round"><path d="M72.2,964.3 h4.5 l3,3 v11.4 h-11.4 l-3.3,-3.3 v-4.2 h6.7 z"/><path d="M72.2,964.3 l3.3,3 h4.2 M75.5,967.3 v7.1 h-7.2 l-3.3,-3.2 M68.3,974.4 v4.3" stroke-width="0.9"/></g>
<g fill="none" stroke="#555" stroke-width="1.1" stroke-linejoin="round"><path d="M72.2,990.3 h4.5 l3,3 v11.4 h-11.4 l-3.3,-3.3 v-4.2 h6.7 z"/><path d="M72.2,990.3 l3.3,3 h4.2 M75.5,993.3 v7.1 h-7.2 l-3.3,-3.2 M68.3,1000.4 v4.3" stroke-width="0.9"/></g>
<path d="M255,549 v13 M258,548 h11 M258,553 h11 M258,558 h11 M255.5,563 h13.5" stroke="#444" stroke-width="1.3"/><path d="M252.5,546.5 l2.5,2.5 l2.5,-2.5" fill="none" stroke="#444" stroke-width="1"/>
<path d="M492.5,92.5 l5,5 l9.5,-9.5" fill="none" stroke="#fff" stroke-width="3.2"/>
<path d="M523,89 l10.5,10.5 M533.5,89 l-10.5,10.5" stroke="#cc2a3a" stroke-width="3"/>
<path d="M493.5,141.5 l7.5,7.5 M501,141.5 l-7.5,7.5" stroke="#444" stroke-width="1.2"/>
<g fill="none" stroke="#444" stroke-width="1.1"><circle cx="526" cy="125.2" r="8.3"/><circle cx="526" cy="125.2" r="6.3"/><path d="M526,120 v5.5 h5"/></g>
<path d="M328.5,258 l2.5,2.5 l5,-5" fill="none" stroke="#fff" stroke-width="1.7"/>
<g fill="none" stroke="#2a2a2a" stroke-width="1.3"><circle cx="452" cy="284.6" r="7.9"/><path d="M448,288.3 l1.2,-3.5 l7.5,-6.8 l2.4,2.4 l-7.2,7 z" stroke-width="1.2"/><path d="M451.5,282.5 l2.3,2.3" stroke-width="0.8"/><path d="M457.5,290 l2.3,2.6" stroke-width="2"/></g><path d="M445.3,289.4 h12.5 M448,288.3 l10,-4.5" stroke="#2f4fa0" stroke-width="1" fill="none"/>
<circle cx="531" cy="288.1" r="6" fill="#a0a0a0"/><path d="M528.6,286.3 q0,-2.5 2.6,-2.5 q2.5,0 2.5,2.3 q0,1.3 -1.4,2 q-1,0.5 -1,1.6 v0.5" fill="none" stroke="#fff" stroke-width="1.6"/><circle cx="531.2" cy="291.6" r="0.95" fill="#fff"/>
<polygon points="1822.3,100.6 1830,91.3 1838,100.6" fill="#9a9a9a"/>
<polygon points="1822.3,230.8 1838,230.8 1830,240.5" fill="#9a9a9a"/>
<polygon points="1765.2,158.6 1765.2,172.8 1755.2,165.7" fill="#9a9a9a"/>
<polygon points="1895,158.6 1895,172.8 1904.7,165.7" fill="#9a9a9a"/>
<path d="M1808,101.5 q-14,4 -24,14" fill="none" stroke="#9a9a9a" stroke-width="4"/><polygon points="1776,124.5 1778,109 1789,120" fill="#9a9a9a"/>
<path d="M1851.5,101.5 q14,4 24,14" fill="none" stroke="#9a9a9a" stroke-width="4"/><polygon points="1884,124.5 1882,109 1871,120" fill="#9a9a9a"/>
<path d="M1812,137.6 H1848 A10.4,10.4 0 0 0 1858.4,148 V183.5 A10.4,10.4 0 0 0 1848,193.8 H1812 A10.4,10.4 0 0 0 1801.5,183.5 V148 A10.4,10.4 0 0 0 1812,137.6 Z" fill="#e6e9ec"/><rect x="1807.5" y="143.2" width="44.8" height="45.4" rx="9" fill="#fdfdfd"/>
<path d="M1860.5,137.6 v59" stroke="#2b2bb0" stroke-width="1.4"/><path d="M1801.5,196.5 h59.5" stroke="#2a962a" stroke-width="1.4"/>
<g><path d="M1866.5,226 l9,-3.5 l8.5,3 v11 l-8.5,4 l-9,-3.5 z" fill="#d8d8d8" stroke="#444" stroke-width="1.3"/><path d="M1866.5,226 l9,3 l8.5,-3.5 M1875.5,229 v12" fill="none" stroke="#444" stroke-width="1.1"/><path d="M1866.5,226 l9,3 v12 l-9,-3.5z" fill="#a8a8a8"/><path d="M1875.5,229 l8.5,-3.5 v11 l-8.5,4z" fill="#f2f2f2"/></g><polygon points="1892.3,231 1899.7,231 1896,234.5" fill="#222"/>
<g><path d="M1897,455 l7.5,-13 l5,2.6 l-8,12z" fill="#6f6f6f"/><path d="M1897.5,455.5 l12,-9.5 l3.5,4 l-11,7z" fill="#a9a9a9"/><rect x="1895" y="452.5" width="20" height="7.5" rx="1" fill="#f0f0f0" stroke="#555" stroke-width="1"/><rect x="1906" y="453.5" width="8" height="5.5" fill="#cfcfcf"/><circle cx="1898.5" cy="456.2" r="1.5" fill="#444"/></g>
<rect x="1895" y="474" width="10" height="8" fill="#2463c8"/><path d="M1895,476.67 h10 M1895,479.33 h10 M1898.33,474 v8 M1901.67,474 v8" stroke="#fff" stroke-width="0.8"/><g fill="none" stroke="#333" stroke-width="1.2" stroke-linejoin="round"><path d="M1900.5,482.5 l6.5,-3.8 l7,3.8 v8 l-7,3.8 l-6.5,-3.8 z M1900.5,482.5 l6.8,3.8 l6.7,-3.8 M1907.3,486.3 v8"/></g>
<rect x="1895" y="507" width="9.5" height="8" fill="#444"/><path d="M1895,509.67 h9.5 M1895,512.33 h9.5 M1898.17,507 v8 M1901.33,507 v8" stroke="#fff" stroke-width="0.8"/><g fill="none" stroke="#333" stroke-width="1.1" stroke-linejoin="round"><path d="M1901.5,514.5 l5,-3 l5.5,3 v6 l-5.5,3 l-5,-3 z M1901.5,514.5 l5.2,3 l5.3,-3 M1906.7,517.5 v6"/><path d="M1898.5,513 q-1.5,0 -1.5,2 v3.5 q0,1.5 -1.3,2 q1.3,0.5 1.3,2 v3 q0,2 1.5,2 M1914,510 q1.5,0 1.5,2 v4 q0,1.5 1.3,2 q-1.3,0.5 -1.3,2 v3.5 q0,2 -1.5,2"/></g>
<rect x="1895" y="540" width="9.5" height="8.5" fill="#444"/><path d="M1895,542.83 h9.5 M1895,545.67 h9.5 M1898.17,540 v8.5 M1901.33,540 v8.5" stroke="#fff" stroke-width="0.8"/><g fill="none" stroke="#222" stroke-width="1.8"><path d="M1896.5,548 q-2,6 0,12"/><path d="M1913.5,546 q2.5,7 0,14"/><path d="M1903,559 q1.5,-1 2.5,-5 q1,-5 4,-5.5"/><path d="M1901.5,552 l4,0 q2,0.5 2.5,3 l1,4 l1.5,-1"/></g>
<g><rect x="1893.5" y="582" width="22" height="22" rx="3" fill="#d8d8d8"/><rect x="1895.5" y="588" width="18" height="11" rx="2" fill="#2b2b2b"/><circle cx="1901" cy="593" r="2.6" fill="#8ac4f0"/><circle cx="1908" cy="593" r="2.6" fill="#8ac4f0"/><path d="M1899,584 v3 M1904.5,583 v4 M1910,584 v3" stroke="#2b4ea0" stroke-width="1"/><path d="M1902,597 q2.5,1.5 5,0" stroke="#fff" stroke-width="0.8" fill="none"/></g>
<g><rect x="1893.5" y="615" width="22" height="22" rx="2" fill="#4caf50"/><rect x="1895.5" y="617" width="18" height="18" fill="#5cb85c"/><path d="M1897,620.5 q4,-1 7.5,1 v10.5 q-3.5,-2 -7.5,-1 z M1912,620.5 q-4,-1 -7.5,1 v10.5 q3.5,-2 7.5,-1 z" fill="#fff"/></g>
<g><rect x="1893.5" y="648" width="22" height="22" rx="2" fill="#d0d0d0"/><rect x="1895.5" y="650" width="18" height="18" fill="#1446b8"/><rect x="1896.5" y="651" width="16" height="16" fill="none" stroke="#111" stroke-width="1"/><path d="M1897.5,653.5 q3.5,-1 7,0.8 v10 q-3.5,-1.8 -7,-0.8 z M1911.5,653.5 q-3.5,-1 -7,0.8 v10 q3.5,-1.8 7,-0.8 z" fill="#fff"/></g>
<g fill="none" stroke="#222" stroke-width="1.4"><ellipse cx="1832.5" cy="1033.8" rx="5" ry="3.5"/><ellipse cx="1832.5" cy="1033.5" rx="2.3" ry="1.3"/><path d="M1837.5,1034 v6 q0,2 -3,2 h-12 v-5.2 h12"/><path d="M1825,1039.5 v1.5 M1828,1039.5 v1.5 M1831,1039.5 v1.5" stroke-width="0.8"/></g>
<g fill="none" stroke="#222" stroke-width="1.5"><path d="M1855.5,1042.5 a9.8,9.8 0 0 1 19.5,0 z"/><path d="M1859.5,1039.5 a5.8,5.8 0 0 1 11.5,0 q-3,-2.5 -5.75,-2.5 q-2.75,0 -5.75,2.5z" stroke-width="1.1"/></g>
<g fill="#222"><rect x="1893" y="1041" width="14" height="2"/><rect x="1893.5" y="1029" width="12.5" height="1.5"/><rect x="1899.2" y="1029" width="1.5" height="12" fill="#555"/><path d="M1895,1030 l-1.8,7 h3.6 z M1904.8,1030 l-1.8,7 h3.6 z" fill="none" stroke="#222" stroke-width="0.9"/><rect x="1893" y="1036.5" width="3.8" height="1.5"/><rect x="1903" y="1036.5" width="3.8" height="1.5"/></g>
<path d="M56.5,1057 v15 M49,1064.5 h15" stroke="#555" stroke-width="2.6"/>
<path d="M76,1050.5 h33 l7,13 l-7,13 h-33 q-2,0 -2,-2 v-22 q0,-2 2,-2 z" fill="#ebebeb"/>
<path d="M83,1062 l9,-8 l9,8 h-2 v9 h-5 v-5 h-4 v5 h-5 v-9 z" fill="#555"/><rect x="96" y="1054" width="2.5" height="4" fill="#555"/>
<path d="M109,1050.5 h116 l8,13 l-8,13 h-116 l7,-13 z" fill="#fff"/>
<path d="M126.5,1056 h6 l1.5,2 h9.5 v10.8 h-17 z" fill="none" stroke="#333" stroke-width="1.2"/>
<path d="M236,1050 h196 q5,0 5,5 v22 h-196 q-5,0 -5,-5 l5,-7.5 l-5,-7.5 z" fill="#e9e9e9"/>
<circle cx="255.5" cy="1063" r="6.5" fill="#6b9be0"/><circle cx="255.5" cy="1063" r="2.6" fill="#fff"/><rect x="254.7" y="1056.5" width="1.6" height="3" fill="#fff"/><rect x="254.7" y="1066.5" width="1.6" height="3" fill="#fff"/>
<g stroke="#333" stroke-width="1.1"><path d="M268,1056 l3,-2.5 h12 v15 l-3,2.5 h-12 z" fill="#fff"/><path d="M268,1056 h12 v15 M280,1056 l3,-2.5" fill="none"/><rect x="270" y="1057.5" width="8.5" height="8.5" fill="#888" stroke="none"/></g>
<g fill="#fff" stroke="#333" stroke-width="1.1"><path d="M451,1058 h5.5 v12.5 h-5.5 z M454,1058 l2,-2"/><path d="M458,1056 l2.5,-2.5 h5 v17 h-7.5 z M458,1056 h5 v14.5 M463,1056 l2.5,-2.5" /></g>
</svg>
<div class="t" style="left:31.5px;top:9.5px;font-size:17.5px;line-height:17.5px;color:#676767;letter-spacing:0.2px">onshape</div>
<div class="t" style="left:141.3px;top:10.6px;font-size:22px;line-height:22px;color:#333;font-weight:bold;letter-spacing:-0.4px">1B - Practice Exercise Solutions</div>
<div class="t" style="left:475.3px;top:15.8px;font-size:15.2px;line-height:15.2px;color:#9a9a9a">FRCDesignLib Rework</div>
<div class="t" style="left:693.0px;top:14.8px;font-size:14.6px;line-height:14.6px;color:#8e8e8e">Stage 1</div>
<div class="t" style="left:875.8px;top:13.5px;font-size:14px;line-height:14px;color:#333">225</div>
<div class="t" style="left:937.6px;top:13.5px;font-size:14px;line-height:14px;color:#333">5280</div>
<div class="t" style="left:1008.6px;top:13.5px;font-size:14px;line-height:14px;color:#333">4</div>
<div class="t" style="left:1558.5px;top:9.2px;font-size:11px;line-height:11px;color:#fff;font-weight:bold">9+</div>
<div class="t" style="left:1684.5px;top:12.8px;font-size:14.2px;line-height:14.2px;color:#fff">Share</div>
<div class="t" style="left:1819.0px;top:14.4px;font-size:14px;line-height:14px;color:#333">Andrew Card</div>
<div class="t" style="left:907.5px;top:59.5px;font-size:6px;line-height:6px;color:#222;font-weight:bold">DXF</div>
<div class="t" style="left:1488.3px;top:51.3px;font-size:13.6px;line-height:13.6px;color:#333">Search tools...</div>
<div class="t" style="left:1581.5px;top:53.9px;font-size:11px;line-height:11px;color:#333">alt/&#x2325;</div>
<div class="t" style="left:1617.5px;top:53.5px;font-size:11.5px;line-height:11.5px;color:#333">c</div>
<div class="t" style="left:86.0px;top:94.3px;font-size:12.6px;line-height:12.6px;color:#7a7a7a;font-style:italic">Filter by name or type</div>
<div class="t" style="left:44.4px;top:123.3px;font-size:13.2px;line-height:13.2px;color:#2b2b2b;-webkit-text-stroke:0.25px #2b2b2b">Features (24)</div>
<div class="t" style="left:63.4px;top:151.2px;font-size:13px;line-height:13px;color:#2e2e2e">Default geometry</div>
<div class="t" style="left:85.2px;top:177.2px;font-size:13px;line-height:13px;color:#2e2e2e">Origin</div>
<div class="t" style="left:85.2px;top:203.2px;font-size:13px;line-height:13px;color:#a9a9a9">Top</div>
<div class="t" style="left:85.2px;top:229.2px;font-size:13px;line-height:13px;color:#a9a9a9">Front</div>
<div class="t" style="left:85.2px;top:255.2px;font-size:13px;line-height:13px;color:#a9a9a9">Right</div>
<div class="t" style="left:86.3px;top:281.2px;font-size:13px;line-height:13px;color:#a9a9a9">Origin Cube</div>
<div class="t" style="left:86.3px;top:307.2px;font-size:13px;line-height:13px;color:#2e2e2e">Frame (5)</div>
<div class="t" style="left:66.4px;top:333.2px;font-size:13px;line-height:13px;color:#a9a9a9">Gearbox Layout</div>
<div class="t" style="left:86.3px;top:359.2px;font-size:13px;line-height:13px;color:#2e2e2e">GB Plates (6)</div>
<div class="t" style="left:66.4px;top:385.2px;font-size:13px;line-height:13px;color:#2e2e2e">Main Belt</div>
<div class="t" style="left:66.4px;top:411.2px;font-size:13px;line-height:13px;color:#2e2e2e">Inter Shaft</div>
<div class="t" style="left:66.4px;top:437.2px;font-size:13px;line-height:13px;color:#2e2e2e">Output Shaft</div>
<div class="t" style="left:86.3px;top:463.2px;font-size:13px;line-height:13px;color:#2e2e2e">Pocketing (4)</div>
<div class="t" style="left:85.2px;top:489.2px;font-size:13px;line-height:13px;color:#a9a9a9">Motor Plate</div>
<div class="t" style="left:85.2px;top:515.2px;font-size:13px;line-height:13px;color:#2e2e2e">Part Lightening...</div>
<div class="t" style="left:85.2px;top:541.2px;font-size:13px;line-height:13px;color:#6e8fa3;font-weight:bold">Inner plate</div>
<div class="t" style="left:85.2px;top:567.2px;font-size:13px;line-height:13px;color:#a9a9a9;font-style:italic">Part Lightening...</div>
<div class="t" style="left:63.4px;top:705.3px;font-size:13px;line-height:13px;color:#2e2e2e">Parts (11)</div>
<div class="t" style="left:85.2px;top:731.5px;font-size:12.8px;line-height:12.8px;color:#a9a9a9">Origin Cube</div>
<div class="t" style="left:85.2px;top:757.5px;font-size:12.8px;line-height:12.8px;color:#2e2e2e">Tube 1&quot;x1&quot;x7&quot;</div>
<div class="t" style="left:85.2px;top:783.5px;font-size:12.8px;line-height:12.8px;color:#2e2e2e">Tube 1&quot;x1&quot;x7&quot;</div>
<div class="t" style="left:85.2px;top:809.5px;font-size:12.8px;line-height:12.8px;color:#2e2e2e">Tube 1&quot;x1&quot;x8&quot;</div>
<div class="t" style="left:85.2px;top:835.5px;font-size:12.8px;line-height:12.8px;color:#2e2e2e">Part 5</div>
<div class="t" style="left:85.2px;top:861.5px;font-size:12.8px;line-height:12.8px;color:#2e2e2e">Motor Plate</div>
<div class="t" style="left:85.2px;top:887.5px;font-size:12.8px;line-height:12.8px;color:#2e2e2e">Inner Plate</div>
<div class="t" style="left:85.2px;top:913.5px;font-size:12.8px;line-height:12.8px;color:#2e2e2e">1 in. Round Spacer</div>
<div class="t" style="left:85.2px;top:939.5px;font-size:12.8px;line-height:12.8px;color:#2e2e2e">60T HTD Belt</div>
<div class="t" style="left:85.2px;top:965.5px;font-size:12.8px;line-height:12.8px;color:#2e2e2e">2.187 in. Rounded Hex ...</div>
<div class="t" style="left:85.2px;top:991.5px;font-size:12.8px;line-height:12.8px;color:#2e2e2e">6 in. Rounded Hex Shaft</div>
<div class="t" style="left:328.5px;top:87.3px;font-size:12.6px;line-height:12.6px;color:#222;font-weight:bold">Inner plate</div>
<div class="t" style="left:331.0px;top:119.5px;font-size:10px;line-height:10px;color:#555">Sketch plane</div>
<div class="t" style="left:332.8px;top:138.9px;font-size:12.8px;line-height:12.8px;color:#444">Face of Inner Plate</div>
<div class="t" style="left:342.5px;top:169.9px;font-size:13.2px;line-height:13.2px;color:#444">Disable imprinting</div>
<div class="t" style="left:342.5px;top:196.8px;font-size:13.2px;line-height:13.2px;color:#444">Show constraints</div>
<div class="t" style="left:342.5px;top:224.5px;font-size:13.2px;line-height:13.2px;color:#444">Show expressions</div>
<div class="t" style="left:342.5px;top:251.5px;font-size:13.2px;line-height:13.2px;color:#444">Show errors</div>
<div class="t" style="left:478.8px;top:278.9px;font-size:12.3px;line-height:12.3px;color:#333">Final</div>
<div class="t" style="left:1820.0px;top:159.2px;font-size:12.8px;line-height:12.8px;color:#222">Left</div>
<div class="t" style="left:1856.5px;top:121.8px;font-size:12px;line-height:12px;color:#5b50d6">Z</div>
<div class="t" style="left:1786.5px;top:190.4px;font-size:12px;line-height:12px;color:#22a822">Y</div>
<div class="t" style="left:150.5px;top:1056.7px;font-size:13.4px;line-height:13.4px;color:#555">Exercise 3</div>
<div class="t" style="left:289.4px;top:1057.4px;font-size:13.7px;line-height:13.7px;color:#6c6c6c">Exercise 3 Assembly</div>
<div class="t" style="left:470.9px;top:1057.4px;font-size:13.65px;line-height:13.65px;color:#333">Exercise 3 Part Studio</div>
</body></html>
